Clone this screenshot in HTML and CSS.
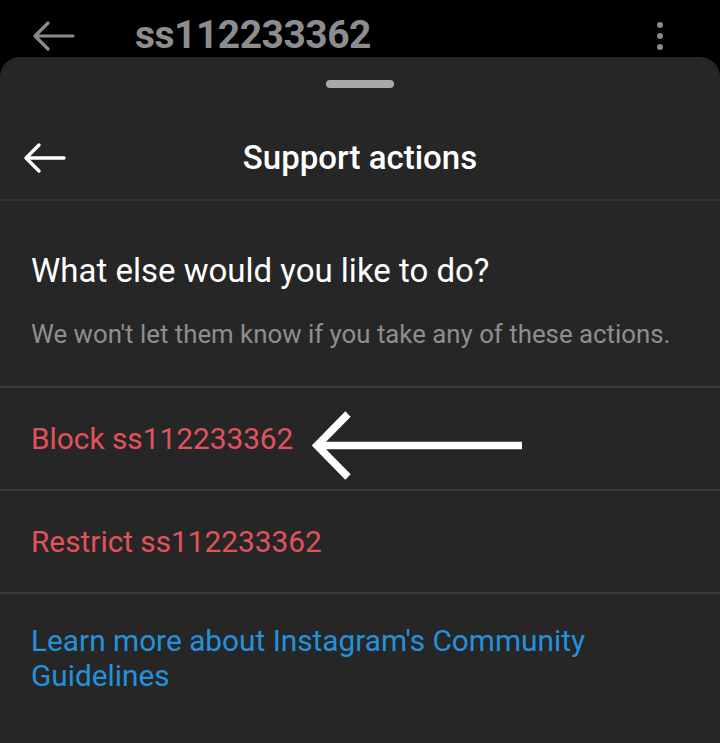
FILE: index.html
```html
<!DOCTYPE html>
<html lang="en">
<head>
<meta charset="utf-8">
<link rel="stylesheet" href="styles.css">
</head>
<body>
<div class="topbar">
  <svg class="top-back" width="44" height="30" viewBox="0 0 44 30"><path d="M42 15H4M17 2L4 15l13 13" fill="none" stroke="#8a8a8a" stroke-width="3.2" stroke-linecap="round" stroke-linejoin="round"/></svg>
  <span class="top-title">ss112233362</span>
  <span class="dots"><i></i><i></i><i></i></span>
</div>
<div class="sheet">
  <div class="handle-wrap"><div class="handle"></div></div>
  <div class="header">
    <svg class="back" width="44" height="32" viewBox="0 0 44 32"><path d="M41 16H4M16 3L3 16l13 13" fill="none" stroke="#ffffff" stroke-width="3.4" stroke-linecap="round" stroke-linejoin="round"/></svg>
    <span class="header-title">Support actions</span>
  </div>
  <div class="intro">
    <div class="intro-title">What else would you like to do?</div>
    <div class="intro-sub">We won't let them know if you take any of these actions.</div>
  </div>
  <div class="row">
    <span class="danger">Block ss112233362</span>
    <svg class="pointer" width="216" height="72" viewBox="0 0 216 72"><path d="M212 35.5H8M38 4L7 35.5 38 67" fill="none" stroke="#ffffff" stroke-width="7.5"/></svg>
  </div>
  <div class="row">
    <span class="danger">Restrict ss112233362</span>
  </div>
  <div class="link-section">
    <span class="link">Learn more about Instagram's Community Guidelines</span>
  </div>
</div>
</body>
</html>
```
FILE: styles.css
```css
html, body {
  margin: 0;
  padding: 0;
  background: #000;
  font-family: Roboto, "Liberation Sans", sans-serif;
}
body {
  width: 720px;
  height: 743px;
  overflow: hidden;
  display: flex;
  flex-direction: column;
}
.topbar {
  height: 57px;
  box-sizing: border-box;
  padding: 14px 0 0 31px;
  display: flex;
  align-items: center;
  flex-shrink: 0;
}
.top-back {
  flex-shrink: 0;
}
.top-title {
  margin-left: 60px;
  color: #8d8d8d;
  font-weight: 700;
  font-size: 39px;
  line-height: 43px;
  letter-spacing: -0.5px;
}
.dots {
  margin-left: auto;
  margin-right: 57px;
  display: flex;
  flex-direction: column;
  gap: 5px;
}
.dots i {
  width: 6px;
  height: 6px;
  border-radius: 50%;
  background: #8a8a8a;
  display: block;
}
.sheet {
  flex: 1;
  background: #262626;
  border-radius: 20px 20px 0 0;
  display: flex;
  flex-direction: column;
}
.handle-wrap {
  display: flex;
  justify-content: center;
  padding-top: 23px;
}
.handle {
  width: 68px;
  height: 8px;
  border-radius: 4px;
  background: #a9a9a9;
}
.header {
  height: 113px;
  display: flex;
  align-items: center;
  justify-content: center;
  position: relative;
  border-bottom: 2px solid #333;
  box-sizing: border-box;
  padding-top: 28px;
}
.back {
  position: absolute;
  left: 23px;
  top: 54px;
}
.header-title {
  color: #fff;
  font-size: 33px;
  font-weight: 500;
}
.intro {
  height: 187px;
  box-sizing: border-box;
  border-bottom: 2px solid #3a3a3a;
  padding: 51px 31px 0;
}
.intro-title {
  color: #fff;
  font-size: 33px;
  line-height: 38px;
}
.intro-sub {
  color: #8e8e8e;
  font-size: 25.8px;
  line-height: 30px;
  margin-top: 29px;
  white-space: nowrap;
}
.row {
  height: 103px;
  box-sizing: border-box;
  border-bottom: 2px solid #3a3a3a;
  display: flex;
  align-items: center;
  padding: 0 31px;
  gap: 16px;
}
.danger {
  color: #e1525d;
  font-size: 29.8px;
}
.pointer {
  margin-left: 1px;
  margin-top: 14px;
}
.link-section {
  padding: 29px 31px 0;
  flex: 1;
}
.link {
  color: #2392dc;
  font-size: 29.8px;
  line-height: 35px;
  display: block;
  width: 600px;
}
```
